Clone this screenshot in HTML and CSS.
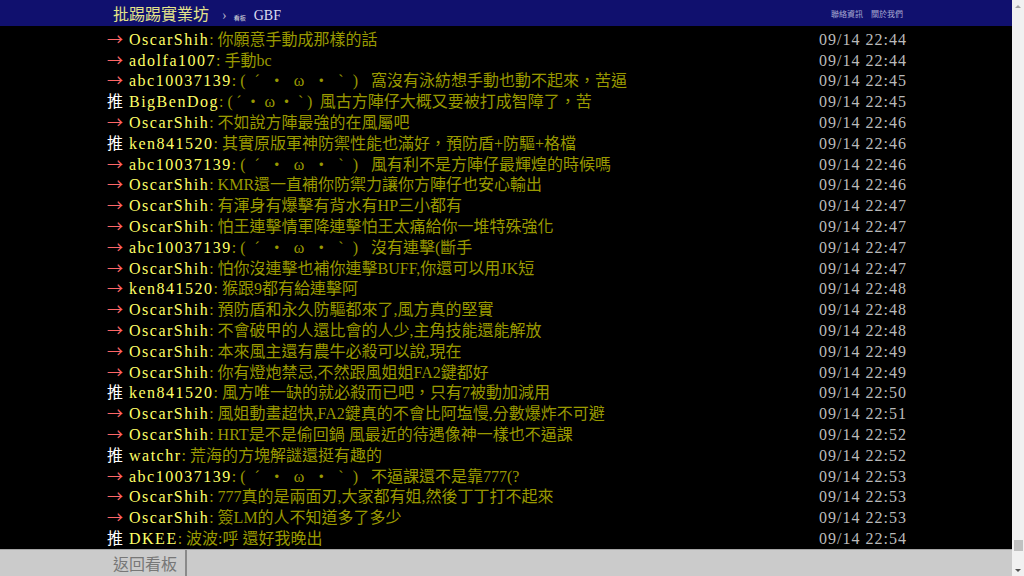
FILE: index.html
```html
<!DOCTYPE html>
<html lang="zh-Hant">
<head>
  <meta charset="UTF-8">
  <title>批踢踢實業坊 › 看板 GBF</title>
  <link rel="stylesheet" href="styles.css">
</head>
<body>
  <div class="window">
    <div class="page">
      <div class="topbar">
        <div class="topbar-inner">
          <div class="board-path">
            <span class="site-title">批踢踢實業坊</span>
            <span class="sep">›</span>
            <span class="board-label">看板</span>
            <span class="board-name">GBF</span>
          </div>
          <div class="top-links">
            <span>聯絡資訊</span>
            <span>關於我們</span>
          </div>
        </div>
      </div>

      <div class="main">
        <div class="push-list">
          <div class="push"><span class="push-tag arrow">→</span><span class="push-userid">OscarShih</span><span class="push-content">: 你願意手動成那樣的話</span><span class="push-ipdatetime">09/14 22:44</span></div>
          <div class="push"><span class="push-tag arrow">→</span><span class="push-userid">adolfa1007</span><span class="push-content">: 手動bc</span><span class="push-ipdatetime">09/14 22:44</span></div>
          <div class="push"><span class="push-tag arrow">→</span><span class="push-userid">abc10037139</span><span class="push-content">: <span class="kao">(ˊ・ω・ˋ)</span> 窩沒有泳紡想手動也動不起來，苦逼</span><span class="push-ipdatetime">09/14 22:45</span></div>
          <div class="push"><span class="push-tag">推</span><span class="push-userid">BigBenDog</span><span class="push-content">: <span class="kao kao-narrow">(ˊ・ω・`)</span> 風古方陣仔大概又要被打成智障了，苦</span><span class="push-ipdatetime">09/14 22:45</span></div>
          <div class="push"><span class="push-tag arrow">→</span><span class="push-userid">OscarShih</span><span class="push-content">: 不如說方陣最強的在風屬吧</span><span class="push-ipdatetime">09/14 22:46</span></div>
          <div class="push"><span class="push-tag">推</span><span class="push-userid">ken841520</span><span class="push-content">: 其實原版軍神防禦性能也滿好，預防盾+防驅+格檔</span><span class="push-ipdatetime">09/14 22:46</span></div>
          <div class="push"><span class="push-tag arrow">→</span><span class="push-userid">abc10037139</span><span class="push-content">: <span class="kao">(ˊ・ω・ˋ)</span> 風有利不是方陣仔最輝煌的時候嗎</span><span class="push-ipdatetime">09/14 22:46</span></div>
          <div class="push"><span class="push-tag arrow">→</span><span class="push-userid">OscarShih</span><span class="push-content">: KMR還一直補你防禦力讓你方陣仔也安心輸出</span><span class="push-ipdatetime">09/14 22:46</span></div>
          <div class="push"><span class="push-tag arrow">→</span><span class="push-userid">OscarShih</span><span class="push-content">: 有渾身有爆擊有背水有HP三小都有</span><span class="push-ipdatetime">09/14 22:47</span></div>
          <div class="push"><span class="push-tag arrow">→</span><span class="push-userid">OscarShih</span><span class="push-content">: 怕王連擊情軍降連擊怕王太痛給你一堆特殊強化</span><span class="push-ipdatetime">09/14 22:47</span></div>
          <div class="push"><span class="push-tag arrow">→</span><span class="push-userid">abc10037139</span><span class="push-content">: <span class="kao">(ˊ・ω・ˋ)</span> 沒有連擊(斷手</span><span class="push-ipdatetime">09/14 22:47</span></div>
          <div class="push"><span class="push-tag arrow">→</span><span class="push-userid">OscarShih</span><span class="push-content">: 怕你沒連擊也補你連擊BUFF,你還可以用JK短</span><span class="push-ipdatetime">09/14 22:47</span></div>
          <div class="push"><span class="push-tag arrow">→</span><span class="push-userid">ken841520</span><span class="push-content">: 猴跟9都有給連擊阿</span><span class="push-ipdatetime">09/14 22:48</span></div>
          <div class="push"><span class="push-tag arrow">→</span><span class="push-userid">OscarShih</span><span class="push-content">: 預防盾和永久防驅都來了,風方真的堅實</span><span class="push-ipdatetime">09/14 22:48</span></div>
          <div class="push"><span class="push-tag arrow">→</span><span class="push-userid">OscarShih</span><span class="push-content">: 不會破甲的人還比會的人少,主角技能還能解放</span><span class="push-ipdatetime">09/14 22:48</span></div>
          <div class="push"><span class="push-tag arrow">→</span><span class="push-userid">OscarShih</span><span class="push-content">: 本來風主還有農牛必殺可以說,現在</span><span class="push-ipdatetime">09/14 22:49</span></div>
          <div class="push"><span class="push-tag arrow">→</span><span class="push-userid">OscarShih</span><span class="push-content">: 你有燈炮禁忌,不然跟風姐姐FA2鍵都好</span><span class="push-ipdatetime">09/14 22:49</span></div>
          <div class="push"><span class="push-tag">推</span><span class="push-userid">ken841520</span><span class="push-content">: 風方唯一缺的就必殺而已吧，只有7被動加減用</span><span class="push-ipdatetime">09/14 22:50</span></div>
          <div class="push"><span class="push-tag arrow">→</span><span class="push-userid">OscarShih</span><span class="push-content">: 風姐動畫超快,FA2鍵真的不會比阿塩慢,分數爆炸不可避</span><span class="push-ipdatetime">09/14 22:51</span></div>
          <div class="push"><span class="push-tag arrow">→</span><span class="push-userid">OscarShih</span><span class="push-content">: HRT是不是偷回鍋 風最近的待遇像神一樣也不逼課</span><span class="push-ipdatetime">09/14 22:52</span></div>
          <div class="push"><span class="push-tag">推</span><span class="push-userid">watchr</span><span class="push-content">: 荒海的方塊解謎還挺有趣的</span><span class="push-ipdatetime">09/14 22:52</span></div>
          <div class="push"><span class="push-tag arrow">→</span><span class="push-userid">abc10037139</span><span class="push-content">: <span class="kao">(ˊ・ω・ˋ)</span> 不逼課還不是靠777(?</span><span class="push-ipdatetime">09/14 22:53</span></div>
          <div class="push"><span class="push-tag arrow">→</span><span class="push-userid">OscarShih</span><span class="push-content">: 777真的是兩面刃,大家都有姐,然後丁丁打不起來</span><span class="push-ipdatetime">09/14 22:53</span></div>
          <div class="push"><span class="push-tag arrow">→</span><span class="push-userid">OscarShih</span><span class="push-content">: 簽LM的人不知道多了多少</span><span class="push-ipdatetime">09/14 22:53</span></div>
          <div class="push"><span class="push-tag">推</span><span class="push-userid">DKEE</span><span class="push-content">: 波波:呼 還好我晚出</span><span class="push-ipdatetime">09/14 22:54</span></div>
        </div>
      </div>

      <div class="navigation">
        <div class="navigation-inner">
          <span class="nav-back">返回看板</span>
        </div>
      </div>
    </div>

    <div class="scrollbar">
      <div class="scroll-btn"><span class="tri-up"></span></div>
      <div class="scroll-track"><div class="scroll-thumb"></div></div>
      <div class="scroll-btn"><span class="tri-down"></span></div>
    </div>
  </div>
</body>
</html>
```

FILE: styles.css
```css
body {
  margin: 0;
  background-color: #000;
  font-family: "Liberation Serif", "Noto Sans CJK TC", serif;
  overflow: hidden;
}

.window {
  display: flex;
  height: 100vh;
}

.page {
  flex: 1;
  min-width: 0;
  display: flex;
  flex-direction: column;
  background-color: #000;
}

/* top bar */
.topbar {
  height: 26px;
  flex-shrink: 0;
  background-color: #10106e;
}

.topbar-inner {
  width: 802px;
  height: 100%;
  margin: 0 auto;
  display: flex;
  align-items: center;
  justify-content: space-between;
}

.board-path {
  display: flex;
  align-items: baseline;
}

.site-title {
  padding-left: 8px;
  font-family: "Noto Sans CJK TC", sans-serif;
  font-size: 16px;
  color: #e4e48a;
}

.sep {
  margin: 0 7px 0 13px;
  font-size: 14px;
  color: #b0b0c8;
}

.board-label {
  font-family: "Noto Sans CJK TC", sans-serif;
  font-size: 6px;
  color: #e0e0e0;
}

.board-name {
  margin-left: 8px;
  font-size: 14px;
  color: #dcdcf0;
}

.top-links {
  display: flex;
  gap: 8px;
  padding-right: 4px;
  font-family: "Noto Sans CJK TC", sans-serif;
  font-size: 8px;
  color: #a9a9d2;
}

/* pushes */
.main {
  flex: 1;
  overflow: hidden;
  padding-top: 1.8px;
}

.push-list {
  width: 802px;
  margin: 0 auto;
}

.push {
  display: flex;
  align-items: baseline;
  height: 20.8px;
  line-height: 20.8px;
  font-size: 16px;
  white-space: nowrap;
}

.push-tag {
  width: 24px;
  flex-shrink: 0;
  padding-left: 2px;
  box-sizing: border-box;
  font-family: "Noto Sans CJK TC", sans-serif;
  color: #fff;
}

.push-tag.arrow {
  color: #f66;
}

.push-userid {
  color: #ff6;
  letter-spacing: 1.5px;
}

.push-content {
  flex: 1;
  color: #990;
}

.kao {
  letter-spacing: 9px;
}

.kao-narrow {
  letter-spacing: 3.5px;
}

.push-ipdatetime {
  color: #bbb;
  letter-spacing: 1px;
}

/* bottom bar */
.navigation {
  height: 27px;
  flex-shrink: 0;
  box-sizing: border-box;
  background-color: #cbcbcb;
  border-top: 1px solid #a5a5a5;
}

.navigation-inner {
  width: 802px;
  height: 100%;
  margin: 0 auto;
  display: flex;
}

.nav-back {
  padding: 0 8px;
  line-height: 26px;
  font-family: "Noto Sans CJK TC", sans-serif;
  font-size: 16px;
  color: #777;
  border-right: 2px solid #8a8a8a;
}

/* fake scrollbar */
.scrollbar {
  width: 12px;
  flex-shrink: 0;
  display: flex;
  flex-direction: column;
  background-color: #f1f1f1;
}

.scroll-btn {
  height: 12px;
  display: flex;
  align-items: center;
  justify-content: center;
}

.tri-up {
  border-left: 3px solid transparent;
  border-right: 3px solid transparent;
  border-bottom: 3px solid #a3a3a3;
}

.tri-down {
  border-left: 3px solid transparent;
  border-right: 3px solid transparent;
  border-top: 3px solid #505050;
}

.scroll-track {
  flex: 1;
  display: flex;
  flex-direction: column;
  justify-content: flex-end;
  align-items: flex-end;
  padding: 0 1px 13px 0;
}

.scroll-thumb {
  width: 9px;
  height: 11px;
  background-color: #c1c1c1;
}
```
